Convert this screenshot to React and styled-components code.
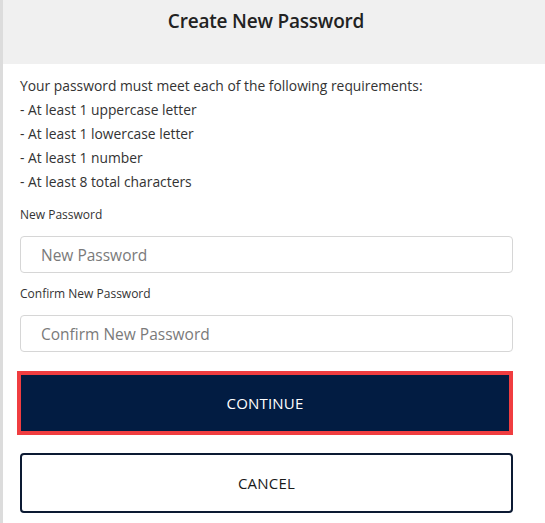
import styled, { createGlobalStyle } from "styled-components";

const GlobalStyle = createGlobalStyle`
  html, body {
    margin: 0;
    padding: 0;
    background: #fff;
  }
  body {
    font-family: "Open Sans", "Noto Sans", sans-serif;
    color: #333;
  }
`;

const Page = styled.div`
  min-height: 523px;
  border-left: 3px solid #dcdcdc;
  box-sizing: border-box;
`;

const Header = styled.div`
  height: 64px;
  background: #f0f0f0;
  display: flex;
  justify-content: center;
  padding: 8px 16px 0 0;
  box-sizing: border-box;

  h1 {
    margin: 0;
    font-size: 19px;
    font-weight: 600;
    color: #222;
    letter-spacing: -0.2px;
  }
`;

const Body = styled.div`
  width: 493px;
  padding: 10px 0 0 17px;
  display: flex;
  flex-direction: column;
`;

const Requirements = styled.div`
  font-size: 13.85px;
  line-height: 24px;
  color: #333;
  margin-bottom: 12px;
`;

const Label = styled.label`
  font-size: 12px;
  line-height: 18px;
  color: #333;
  margin-bottom: 12px;
`;

const Input = styled.input`
  height: 37px;
  box-sizing: border-box;
  border: 1px solid #d6d6d6;
  border-radius: 4px;
  padding: 0 20px;
  font-family: inherit;
  font-size: 15.5px;
  color: #333;
  margin-bottom: ${(p) => p.$gap || 12}px;
  outline: none;

  &::placeholder {
    color: #7a7a7a;
  }
`;

const Button = styled.button`
  box-sizing: border-box;
  font-family: inherit;
  font-size: 15px;
  letter-spacing: 0.2px;
  cursor: pointer;
  ${(p) =>
    p.$primary
      ? `
    height: 64px;
    margin-left: -3px;
    width: 496px;
    background: #021c42;
    color: #fff;
    border: 4px solid #f03d40;
    margin-bottom: 18px;
  `
      : `
    height: 60px;
    width: 493px;
    background: #fff;
    color: #1a1a1a;
    border: 2px solid #0c1a33;
    border-radius: 4px;
  `}
`;

export default function App() {
  return (
    <>
      <GlobalStyle />
      <Page>
        <Header>
          <h1>Create New Password</h1>
        </Header>
        <Body>
          <Requirements>
            Your password must meet each of the following requirements:
            <br />- At least 1 uppercase letter
            <br />- At least 1 lowercase letter
            <br />- At least 1 number
            <br />- At least 8 total characters
          </Requirements>
          <Label>New Password</Label>
          <Input type="password" placeholder="New Password" />
          <Label>Confirm New Password</Label>
          <Input type="password" placeholder="Confirm New Password" $gap={19} />
          <Button $primary>CONTINUE</Button>
          <Button>CANCEL</Button>
        </Body>
      </Page>
    </>
  );
}
